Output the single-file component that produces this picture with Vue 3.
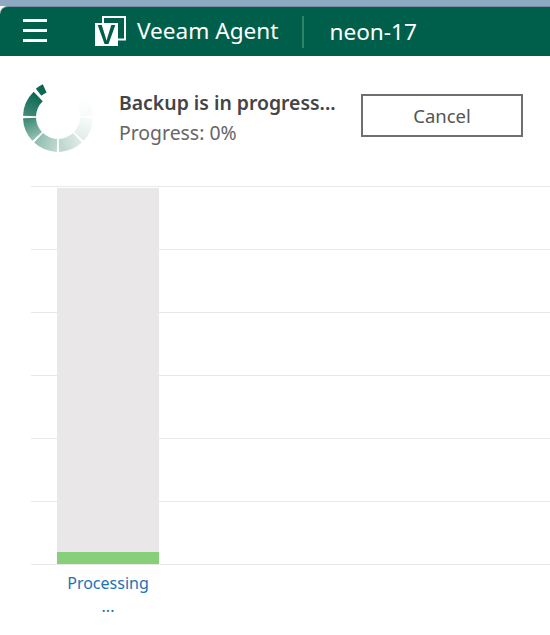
<template>
  <div class="page">
    <div class="window-top"></div>
    <header class="header">
      <div class="burger"><span></span><span></span><span></span></div>
      <svg class="logo" width="32" height="38" viewBox="0 -3 32 38">
        <path d="M7 1 H30 V23.5 H23" fill="none" stroke="#fff" stroke-width="2" />
        <path d="M8 1 V8" fill="none" stroke="#fff" stroke-width="2" />
        <rect x="0" y="7" width="23" height="23" fill="#fff" />
        <text x="11.5" y="27.5" text-anchor="middle" class="logo-v">V</text>
      </svg>
      <div class="product">Veeam Agent</div>
      <div class="divider"></div>
      <div class="host">neon-17</div>
    </header>

    <section class="status">
      <svg class="spinner" width="76" height="76" viewBox="-38 -38 76 76">
        <defs>
          <linearGradient
            v-for="s in segments"
            :key="s.from"
            :id="`seg-${s.from}`"
            gradientUnits="userSpaceOnUse"
            :x1="coords(s.to, 28).x"
            :y1="coords(s.to, 28).y"
            :x2="coords(s.from, 28).x"
            :y2="coords(s.from, 28).y"
          >
            <stop offset="0" :stop-color="s.dark" />
            <stop offset="1" :stop-color="s.light" />
          </linearGradient>
        </defs>
        <path
          v-for="s in segments"
          :key="s.from"
          :d="arc(s.from, s.to, s.inner, s.outer)"
          :fill="`url(#seg-${s.from})`"
        />
      </svg>
      <div class="status-text">
        <div class="status-title">Backup is in progress...</div>
        <div class="status-sub">Progress: 0%</div>
      </div>
      <button class="cancel">Cancel</button>
    </section>

    <section class="chart">
      <div class="bar">
        <div class="bar-fill"></div>
      </div>
    </section>
    <div class="bar-label">Processing<br />...</div>
  </div>
</template>

<script setup>
const segments = [
  { from: 46, to: 88, inner: 22, outer: 35, dark: '#f8fbfa', light: '#ffffff' },
  { from: 92, to: 133, inner: 22, outer: 35, dark: '#e2edea', light: '#f7fafa' },
  { from: 137, to: 178, inner: 22, outer: 35, dark: '#bcd6cf', light: '#dbe9e5' },
  { from: 182, to: 223, inner: 22, outer: 35, dark: '#93bfb3', light: '#bdd7cf' },
  { from: 227, to: 268, inner: 22, outer: 35, dark: '#3f8a77', light: '#8fbcaf' },
  { from: 272, to: 316, inner: 22, outer: 35, dark: '#0f6a55', light: '#3f8a77' },
  { from: 322, to: 335, inner: 27, outer: 36, dark: '#0b6550', light: '#0f6a55' },
]

// angle in degrees, clockwise from the top
const coords = (deg, r) => {
  const a = (deg * Math.PI) / 180
  return { x: (Math.sin(a) * r).toFixed(2), y: (-Math.cos(a) * r).toFixed(2) }
}

const point = (deg, r) => {
  const c = coords(deg, r)
  return `${c.x} ${c.y}`
}

const arc = (from, to, inner, outer) =>
  `M${point(from, outer)} A${outer} ${outer} 0 0 1 ${point(to, outer)} L${point(to, inner)} A${inner} ${inner} 0 0 0 ${point(from, inner)} Z`
</script>

<style>
html,
body {
  margin: 0;
  background: #fff;
}
</style>

<style scoped>
.page {
  width: 550px;
  height: 635px;
  overflow: hidden;
  background: #fff;
  font-family: "Noto Sans", "Open Sans", sans-serif;
}

.window-top {
  height: 6px;
  background: #8ea9c3;
}

.header {
  height: 49px;
  display: flex;
  align-items: center;
  padding-left: 23px;
  background: #005f4b;
  border-top-left-radius: 8px;
  color: #fff;
  border-top: 1px solid #7a8fa5;
}

.burger {
  width: 24px;
  display: flex;
  flex-direction: column;
  gap: 7.5px;
  margin-top: -2px;
}

.burger span {
  height: 2.5px;
  background: #fff;
}

.logo {
  flex: none;
  margin-left: 48px;
  filter: blur(0.3px);
}

.logo-v {
  font-family: "Liberation Sans", sans-serif;
  font-weight: 700;
  font-size: 27px;
  fill: #005f4b;
}

.product {
  margin-left: 10px;
  margin-top: -3px;
  font-size: 22.6px;
}

.divider {
  width: 2px;
  height: 32px;
  margin-left: 24px;
  background: #2f8264;
}

.host {
  margin-left: 25px;
  font-size: 22.6px;
}

.status {
  display: flex;
  align-items: flex-start;
  padding: 25px 27px 0 20px;
  height: 105px;
  box-sizing: border-box;
}

.spinner {
  flex: none;
  margin-top: -2px;
  filter: blur(0.5px);
}

.status-text {
  margin-left: 23px;
  width: 242px;
  padding-top: 7px;
  line-height: 30px;
}

.status-title {
  font-weight: 600;
  color: #444;
  font-size: 19.4px;
}

.status-sub {
  color: #666;
  font-size: 19.4px;
}

.cancel {
  width: 162px;
  height: 43px;
  margin-top: 13px;
  border: 2px solid #6f6f6f;
  background: #fff;
  color: #555;
  font-family: inherit;
  font-size: 18.5px;
  padding: 0;
}

.chart {
  margin-left: 31px;
  margin-top: 25px;
  height: 379px;
  padding: 2px 0 0 26px;
  box-sizing: border-box;
  background: repeating-linear-gradient(to bottom, #e8e8e8 0, #e8e8e8 1px, #fff 1px, #fff 63px);
  display: flex;
}

.bar {
  width: 102px;
  height: 376px;
  background: #e9e7e8;
  display: flex;
  align-items: flex-end;
}

.bar-fill {
  width: 100%;
  height: 12px;
  background: #88cf7c;
}

.bar-label {
  width: 102px;
  margin-left: 57px;
  margin-top: 7px;
  text-align: center;
  font-size: 16px;
  line-height: 23px;
  color: #1a73b8;
}
</style>
